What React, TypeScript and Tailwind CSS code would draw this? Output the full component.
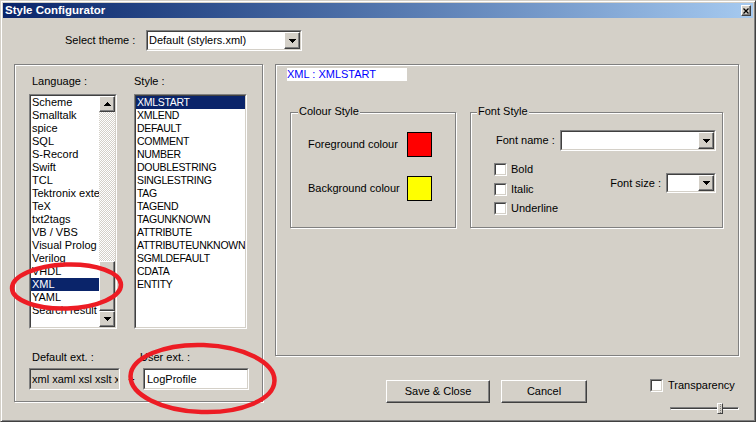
import React from 'react';

const raised =
  'border border-t-white border-l-white border-r-[#404040] border-b-[#404040] shadow-[inset_-1px_-1px_0_#808080] bg-[#d4d0c8]';
const etched = 'border border-[#808080] shadow-[inset_1px_1px_0_#fff,1px_1px_0_#fff]';

function Sunken({
  className = '',
  inner = '',
  children,
}: {
  className?: string;
  inner?: string;
  children?: React.ReactNode;
}) {
  return (
    <div className={`border border-t-[#808080] border-l-[#808080] border-r-white border-b-white ${className}`}>
      <div
        className={`h-full w-full border border-t-[#404040] border-l-[#404040] border-r-[#d4d0c8] border-b-[#d4d0c8] ${inner}`}
      >
        {children}
      </div>
    </div>
  );
}

const Arrow = ({ up = false }: { up?: boolean }) => (
  <svg width="7" height="4" viewBox="0 0 7 4" shapeRendering="crispEdges" className={up ? 'rotate-180' : ''}>
    <rect x="0" y="0" width="7" height="1" fill="#000" />
    <rect x="1" y="1" width="5" height="1" fill="#000" />
    <rect x="2" y="2" width="3" height="1" fill="#000" />
    <rect x="3" y="3" width="1" height="1" fill="#000" />
  </svg>
);

function Combo({ className, text = '' }: { className: string; text?: string }) {
  return (
    <Sunken className={`${className} bg-white`} inner="flex items-stretch">
      <div className="flex-1 pl-[1px] flex items-center overflow-hidden whitespace-nowrap">{text}</div>
      <div className={`w-[16px] ${raised} flex items-center justify-center`}>
        <Arrow />
      </div>
    </Sunken>
  );
}

const Check = () => <Sunken className="w-[13px] h-[13px] shrink-0" inner="bg-white" />;

function Row({ text, selected }: { text: string; selected?: boolean }) {
  return (
    <div
      className={`h-[13px] leading-[13px] pl-[1px] whitespace-nowrap overflow-hidden ${
        selected ? 'bg-[#0a246a] text-white' : ''
      }`}
    >
      {text}
    </div>
  );
}

const languages = [
  'Scheme',
  'Smalltalk',
  'spice',
  'SQL',
  'S-Record',
  'Swift',
  'TCL',
  'Tektronix extended HEX',
  'TeX',
  'txt2tags',
  'VB / VBS',
  'Visual Prolog',
  'Verilog',
  'VHDL',
  'XML',
  'YAML',
  'Search result',
];

const styles = [
  'XMLSTART',
  'XMLEND',
  'DEFAULT',
  'COMMENT',
  'NUMBER',
  'DOUBLESTRING',
  'SINGLESTRING',
  'TAG',
  'TAGEND',
  'TAGUNKNOWN',
  'ATTRIBUTE',
  'ATTRIBUTEUNKNOWN',
  'SGMLDEFAULT',
  'CDATA',
  'ENTITY',
];

export default function App() {
  return (
    <div className="relative w-[756px] h-[422px] overflow-hidden bg-[#d4d0c8] border border-t-[#d4d0c8] border-l-[#d4d0c8] border-r-[#404040] border-b-[#404040] shadow-[inset_1px_1px_0_#fff,inset_-1px_-1px_0_#808080] p-[2px] font-['Liberation_Sans',Arial,sans-serif] text-[11px] text-black">
      {/* title bar */}
      <div className="h-[15px] flex items-center justify-between pl-[2px] pr-[2px] bg-linear-to-r from-[#0a246a] to-[#a6caf0]">
        <span className="text-white font-bold text-[11.5px] leading-[15px]">Style Configurator</span>
        <div className={`w-[10px] h-[11px] ${raised} flex items-center justify-center`}>
          <svg width="6" height="6" viewBox="0 0 6 6">
            <path d="M0.5 0.5L5.5 5.5M5.5 0.5L0.5 5.5" stroke="#000" strokeWidth="1.3" />
          </svg>
        </div>
      </div>

      {/* theme */}
      <div className="mt-[12px] h-[21px] flex items-center pl-[62px]">
        <span className="w-[81px]">Select theme :</span>
        <Combo className="w-[156px] h-[21px]" text="Default (stylers.xml)" />
      </div>

      <div className="mt-[13px] flex">
        {/* left group */}
        <div className={`ml-[11px] w-[249px] h-[338px] ${etched} pt-[10px] pl-[14px]`}>
          <div className="flex gap-[17px]">
            <div className="w-[88px]">
              <div className="h-[13px] leading-[13px] pl-[3px]">Language :</div>
              <Sunken className="mt-[6px] h-[235px] bg-white" inner="flex">
                <div className="flex-1 overflow-hidden">
                  {languages.map((l) => (
                    <Row key={l} text={l} selected={l === 'XML'} />
                  ))}
                </div>
                <div className="w-[16px] flex flex-col">
                  <div className={`h-[16px] ${raised} flex items-center justify-center`}>
                    <Arrow up />
                  </div>
                  <div className="flex-1 bg-[image:repeating-conic-gradient(#fff_0_25%,#d4d0c8_0_50%)] bg-[length:2px_2px]" />
                  <div className={`h-[50px] ${raised}`} />
                  <div className={`h-[16px] ${raised} flex items-center justify-center`}>
                    <Arrow />
                  </div>
                </div>
              </Sunken>
            </div>
            <div className="w-[113px]">
              <div className="h-[13px] leading-[13px]">Style :</div>
              <Sunken className="mt-[6px] h-[235px] bg-white text-[10.5px] tracking-[-0.3px]">
                {styles.map((s) => (
                  <Row key={s} text={s} selected={s === 'XMLSTART'} />
                ))}
              </Sunken>
            </div>
          </div>

          <div className="mt-[22px] flex h-[13px] leading-[13px]">
            <span className="w-[111px] pl-[3px]">Default ext. :</span>
            <span>User ext. :</span>
          </div>
          <div className="mt-[4px] flex items-center">
            <Sunken className="w-[91px] h-[22px]" inner="flex items-center pl-[1px] overflow-hidden whitespace-nowrap">
              xml xaml xsl xslt xsd xhtml
            </Sunken>
            <span className="w-[23px] text-center">+</span>
            <Sunken className="w-[106px] h-[22px] bg-white" inner="flex items-center pl-[2px]">
              LogProfile
            </Sunken>
          </div>
        </div>

        {/* right column */}
        <div className="ml-[12px] w-[464px] flex flex-col">
          <div className={`h-[292px] ${etched}`}>
            <div className="mt-[3px] ml-[11px] w-[120px] h-[13px] leading-[13px] bg-white text-[#0000ff]">
              XML : XMLSTART
            </div>
            <div className="mt-[31px] pl-[14px] flex">
              <div className={`relative w-[166px] h-[116px] ${etched} pt-[19px] pl-[17px]`}>
                <span className="absolute -top-[8px] left-[7px] px-[1px] leading-[13px] bg-[#d4d0c8]">Colour Style</span>
                <div className="flex items-center h-[25px]">
                  <span className="w-[99px]">Foreground colour</span>
                  <div className="w-[25px] h-[25px] border border-black bg-[#ff0000]" />
                </div>
                <div className="mt-[19px] flex items-center h-[25px]">
                  <span className="w-[99px]">Background colour</span>
                  <div className="w-[25px] h-[25px] border border-black bg-[#ffff00]" />
                </div>
              </div>

              <div className={`relative ml-[14px] w-[253px] h-[116px] ${etched}`}>
                <span className="absolute -top-[8px] left-[6px] px-[1px] leading-[13px] bg-[#d4d0c8]">Font Style</span>
                <div className="mt-[17px] h-[21px] flex items-center pl-[25px] pr-[6px]">
                  <span>Font name :</span>
                  <Combo className="ml-auto w-[156px] h-[21px]" />
                </div>
                <div className="mt-[12px] flex pl-[23px] pr-[6px]">
                  <div className="flex flex-col">
                    <div className="flex items-center h-[13px]">
                      <Check />
                      <span className="ml-[4px]">Bold</span>
                    </div>
                    <div className="mt-[7px] flex items-center h-[13px]">
                      <Check />
                      <span className="ml-[4px]">Italic</span>
                    </div>
                    <div className="mt-[6px] flex items-center h-[13px]">
                      <Check />
                      <span className="ml-[4px]">Underline</span>
                    </div>
                  </div>
                  <div className="ml-auto mt-[10px] h-[20px] flex items-center">
                    <span className="mr-[5px]">Font size :</span>
                    <Combo className="w-[50px] h-[20px]" />
                  </div>
                </div>
              </div>
            </div>
          </div>

          <div className="mt-[23px] flex items-start pl-[111px]">
            <button className={`mt-[1px] w-[104px] h-[23px] ${raised}`}>Save &amp; Close</button>
            <button className={`ml-[11px] mt-[1px] w-[86px] h-[23px] ${raised}`}>Cancel</button>
            <div className="ml-[63px] flex flex-col">
              <div className="flex items-center h-[13px]">
                <Check />
                <span className="ml-[5px]">Transparency</span>
              </div>
              <div className="relative mt-[11px] ml-[20px] w-[69px] h-[11px]">
                <div className="mt-[4px] h-[3px] border-t border-l border-t-[#808080] border-l-[#808080] border-b border-r border-b-white border-r-white bg-[#404040]" />
                <div className="absolute left-[47px] top-0 w-[6px] h-[11px] border border-t-white border-l-white border-r-[#404040] border-b-[#404040] bg-[#d4d0c8] flex justify-center">
                  <div className="w-px h-full border-l border-dotted border-[#808080]" />
                </div>
              </div>
            </div>
          </div>
        </div>
      </div>

      {/* red annotation marks */}
      <svg className="absolute left-0 top-0 pointer-events-none" width="756" height="422" viewBox="0 0 756 422">
        <ellipse cx="65.5" cy="285.5" rx="54.5" ry="22" fill="none" stroke="#ed1c24" strokeWidth="4.5" transform="rotate(-2 65.5 285.5)" />
        <ellipse cx="201.5" cy="377.5" rx="72" ry="33.5" fill="none" stroke="#ed1c24" strokeWidth="4.5" transform="rotate(2 201.5 377.5)" />
      </svg>
    </div>
  );
}
